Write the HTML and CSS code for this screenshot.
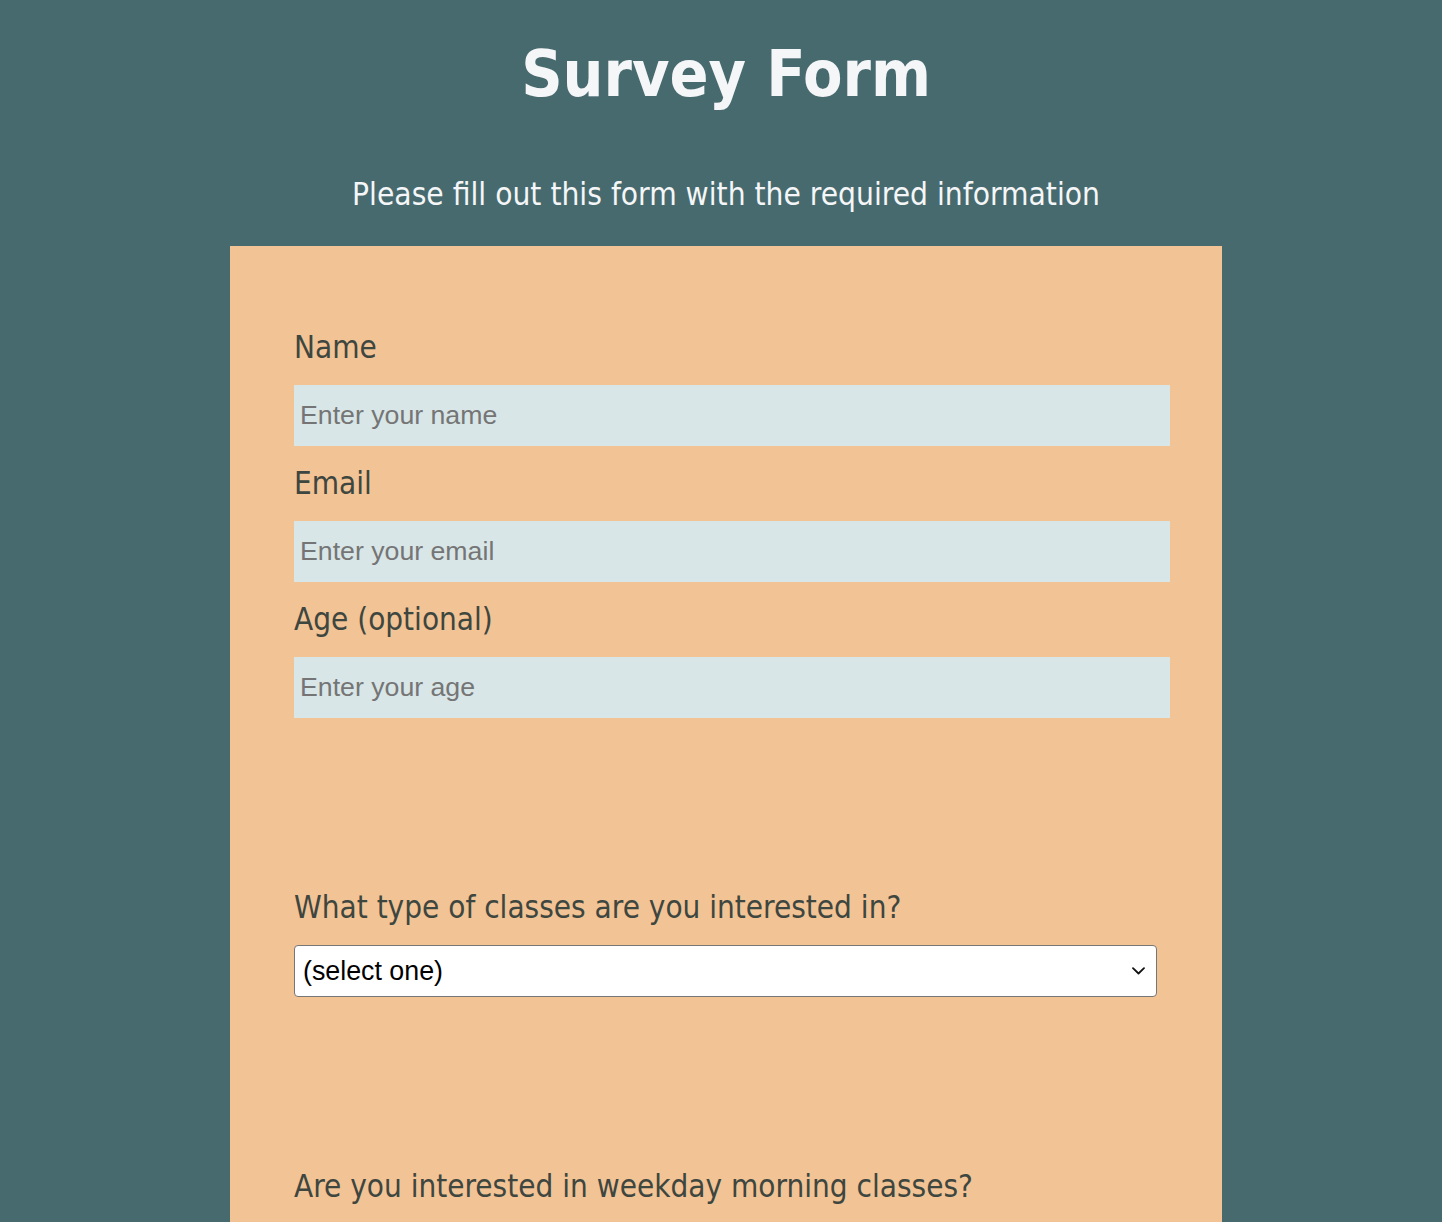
FILE: index.html
```html
<!DOCTYPE html>
<html lang="en">
<head>
<meta charset="utf-8">
<title>Survey Form</title>
<link rel="stylesheet" href="styles.css">
</head>
<body>
<header class="page-header">
  <h1 class="title">Survey Form</h1>
  <p class="subtitle">Please fill out this form with the required information</p>
</header>
<main class="card">
  <form class="form">
    <section class="group">
      <label class="label" for="name">Name</label>
      <input class="field" id="name" type="text" placeholder="Enter your name">
      <label class="label" for="email">Email</label>
      <input class="field" id="email" type="email" placeholder="Enter your email">
      <label class="label" for="age">Age (optional)</label>
      <input class="field" id="age" type="number" placeholder="Enter your age">
    </section>
    <section class="group">
      <label class="label" for="classes">What type of classes are you interested in?</label>
      <div class="select-wrap">
        <select class="dropdown" id="classes">
          <option>(select one)</option>
        </select>
        <svg class="chevron" width="13" height="8" viewBox="0 0 13 8" aria-hidden="true">
          <path d="M1 1.2 L6.5 6.5 L12 1.2" fill="none" stroke="#111" stroke-width="1.8" stroke-linecap="round" stroke-linejoin="round"/>
        </svg>
      </div>
    </section>
    <section class="group">
      <p class="label">Are you interested in weekday morning classes?</p>
    </section>
  </form>
</main>
</body>
</html>
```
FILE: styles.css
```css
html, body {
  margin: 0;
  padding: 0;
}
body {
  background: #476a6f;
  padding-left: 10px;
  font-family: "DejaVu Sans Condensed", "DejaVu Sans", sans-serif;
  font-stretch: condensed;
}
.page-header {
  text-align: center;
  color: #f5f6f7;
}
.title {
  margin: 0;
  padding-top: 36px;
  font-size: 64px;
  line-height: 76px;
  font-weight: bold;
}
.subtitle {
  margin: 62px 0 0;
  font-size: 31.4px;
  line-height: 40px;
}
.card {
  width: 992px;
  box-sizing: border-box;
  margin: 32px auto 0;
  background: #f2c394;
  padding: 81px 52px 40px 64px;
  min-height: 1000px;
}
.form {
  display: flex;
  flex-direction: column;
}
.group {
  display: flex;
  flex-direction: column;
  margin-bottom: 169px;
}
.label {
  display: block;
  margin: 0 0 18px;
  font-size: 31.2px;
  line-height: 40px;
  color: #3e4640;
}
.field {
  display: block;
  width: 100%;
  height: 61px;
  box-sizing: border-box;
  border: none;
  margin: 0 0 17px;
  padding: 0 6px;
  background: #d8e6e7;
  font-family: "Liberation Sans", Arial, sans-serif;
  font-size: 26.7px;
  color: #333;
  outline: none;
}
.field:last-child {
  margin-bottom: 0;
}
.field::placeholder {
  color: #757575;
}
.select-wrap {
  position: relative;
  width: 863px;
  height: 52px;
}
.dropdown {
  display: block;
  width: 100%;
  height: 52px;
  box-sizing: border-box;
  -webkit-appearance: none;
  appearance: none;
  border: 1.5px solid #767676;
  border-radius: 4px;
  background: #fff;
  padding: 0 5px 0 8px;
  font-family: "Liberation Sans", Arial, sans-serif;
  font-size: 26.8px;
  color: #000;
}
.chevron {
  position: absolute;
  right: 12px;
  top: 22px;
  pointer-events: none;
}
```
